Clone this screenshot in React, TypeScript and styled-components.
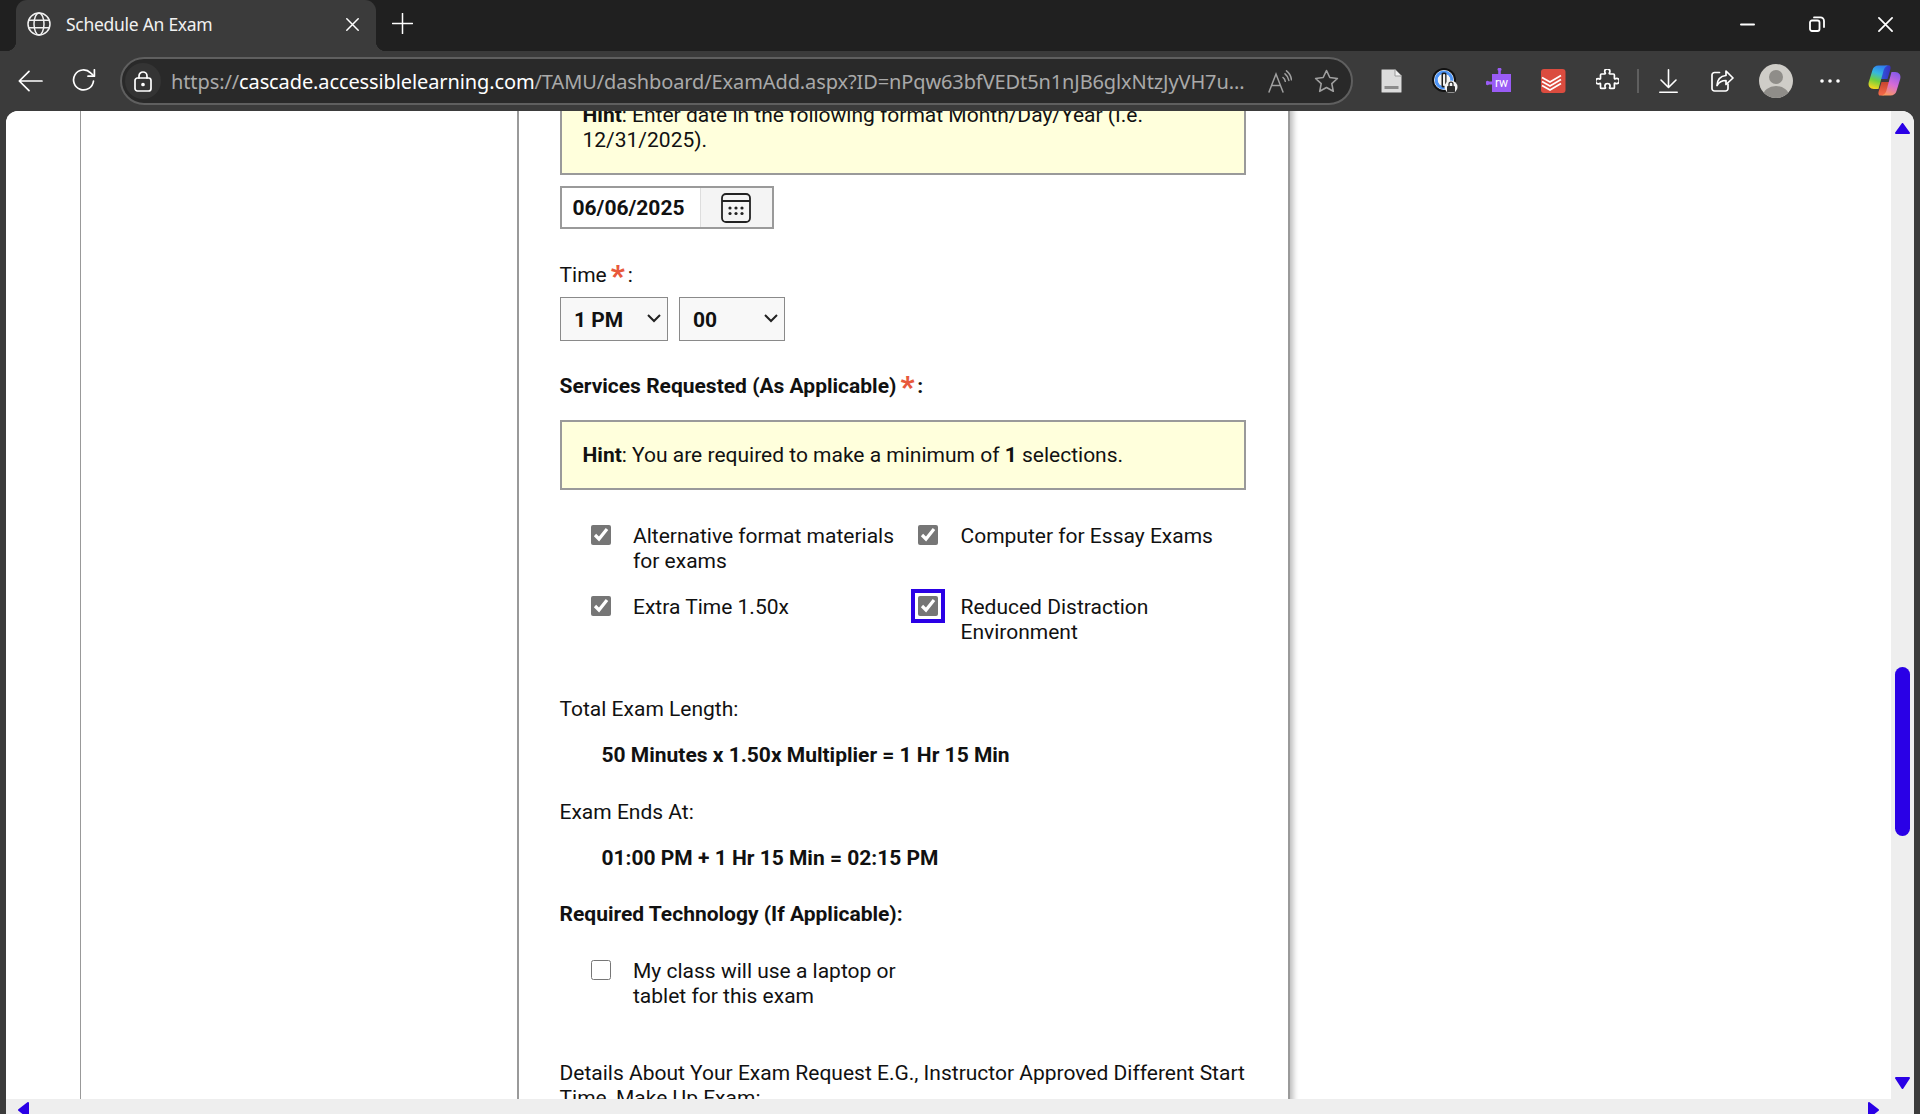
import React from "react";
import styled, { createGlobalStyle } from "styled-components";

const GlobalStyle = createGlobalStyle`
  html, body { margin: 0; padding: 0; overflow: hidden; background: #3b3b3b; }
  * { box-sizing: border-box; }
`;

const Browser = styled.div`
  width: 1920px; height: 1114px; display: flex; flex-direction: column;
  background: #3b3b3b; overflow: hidden; font-family: "Noto Sans", sans-serif;
`;
const TabStrip = styled.div`
  height: 51px; flex: none; background: #202020; display: flex; align-items: stretch; padding-left: 16px;
`;
const Tab = styled.div`
  position: relative; width: 360px; background: #3b3b3b; border-radius: 11px 11px 0 0;
  display: flex; align-items: center; color: #f1f1f1; padding: 0 17px 3px 11px;
  &::before, &::after { content: ""; position: absolute; bottom: 0; width: 10px; height: 10px; }
  &::before { left: -10px; background: radial-gradient(circle at 0 0, #202020 10px, #3b3b3b 10.5px); }
  &::after { right: -10px; background: radial-gradient(circle at 100% 0, #202020 10px, #3b3b3b 10.5px); }
`;
const TabTitle = styled.span`
  font-size: 17.5px; margin-left: 15px; flex: 1; letter-spacing: -0.28px;
`;
const NewTab = styled.div`
  width: 52px; display: flex; align-items: center; justify-content: center; padding-bottom: 4px;
`;
const WindowControls = styled.div`
  margin-left: auto; display: flex; align-items: center; padding: 0 1px 3px 0;
`;
const WindowButton = styled.div`
  width: 69px; display: flex; justify-content: center;
  &:last-child { width: 68px; }
`;
const Toolbar = styled.div`
  height: 60px; flex: none; background: #3b3b3b; display: flex; align-items: center; padding-left: 3px;
`;
const IconSlot = styled.div`
  width: 54px; height: 60px; flex: none; display: flex; align-items: center; justify-content: center;
  padding-bottom: 1px;
`;
const AddressBar = styled.div`
  width: 1233px; height: 48px; margin: 0 11px 0 9px; flex: none; border: 2px solid #5f5f5f; border-radius: 24px;
  background: #292929; display: flex; align-items: center; padding-left: 3px; padding-right: 1px;
`;
const LockCircle = styled.div`
  width: 36px; height: 36px; border-radius: 50%; background: #343434; flex: none;
  display: flex; align-items: center; justify-content: center;
`;
const Url = styled.div`
  flex: 1; min-width: 0; margin-left: 10px; font-size: 20px; color: #a9a9a9; white-space: nowrap; overflow: hidden; letter-spacing: -0.11px;
  b { font-weight: 400; color: #ffffff; }
`;
const AddressAction = styled.div`
  width: 47px; flex: none; display: flex; justify-content: center;
`;
const Separator = styled.div`
  width: 2px; height: 24px; background: #5f5f5f; flex: none; margin: -1px 2px 0 3px;
`;

const Viewport = styled.div`
  flex: 1; min-height: 0; margin: 0 6px; display: flex; border-radius: 12px 12px 0 0; overflow: hidden; background: #fff;
`;
const PageColumn = styled.div`
  flex: 1; min-width: 0; display: flex; flex-direction: column;
`;
const PageArea = styled.div`
  flex: 1; min-height: 0; display: flex; overflow: hidden; background: #fff;
`;
const SideRule = styled.div`
  width: 75px; flex: none; border-right: 1px solid #999;
`;
const Card = styled.main`
  width: 773px; margin-left: 435.5px; flex: none; border: solid #9a9a9a; border-width: 0 2px; align-self: flex-start;
  background: #fff; box-shadow: 5px 0 6px -2px rgba(0,0,0,.28);
  padding: 0 41.7px 0 41px; margin-top: -30px; height: 1100px;
  font-family: Roboto, "Liberation Sans", sans-serif; font-size: 21px; line-height: 25px; color: #111;
`;
const Hint = styled.div<{ $first?: boolean }>`
  background: #ffffdc; border: 2px solid #9a9a9a; padding: ${p => (p.$first ? "20px 21px" : "21px 21px 20px")};
  margin-top: ${p => (p.$first ? 0 : 21)}px;
  b { font-weight: 700; }
`;
const DateField = styled.div`
  margin-top: 11px; width: 214px; height: 43px; display: flex; border: 2px solid #9a9a9a;
`;
const DateInput = styled.input`
  width: 138px; border: 0; padding: 0 0 0 11px; margin: 0; font: 700 21px Roboto, sans-serif; color: #111; background: #fff; outline: none;
`;
const CalendarButton = styled.div`
  flex: 1; background: #f4f4f4; border-left: 1px solid #ddd; display: flex; align-items: center; justify-content: center;
`;
const FieldLabel = styled.div<{ $top: number; $bold?: boolean }>`
  margin-top: ${p => p.$top}px; font-weight: ${p => (p.$bold ? 700 : 400)};
`;
const Required = styled.span`
  color: #e8593c; font-weight: 900; font-size: 30px; line-height: 0; vertical-align: -4px; margin: 0 3px 0 4px;
`;
const SelectRow = styled.div`
  display: flex; gap: 11px; margin-top: 9px;
`;
const SelectBox = styled.div`
  position: relative; display: flex;
  svg { position: absolute; right: 7px; top: 17px; pointer-events: none; }
`;
const TimeSelect = styled.select<{ $width: number }>`
  appearance: none; width: ${p => p.$width}px; height: 44px; background: #f8f8f8; border: 1px solid #8a8a8a; border-radius: 0;
  font: 700 21px Roboto, sans-serif; color: #111; padding: 2px 0 0 13.5px; margin: 0;
`;
const OptionGrid = styled.div<{ $top: number }>`
  display: grid; grid-template-columns: 327.5px 1fr; row-gap: 21px; margin-top: ${p => p.$top}px; padding-left: 31px;
`;
const Option = styled.label`
  display: flex; align-items: flex-start; gap: 22.5px; width: 320px;
`;
const Check = styled.input<{ $focused?: boolean }>`
  width: 20px; height: 20px; margin: 1.5px 0 0; flex: none; accent-color: #767676;
  outline: ${p => (p.$focused ? "4px solid #2a00e6" : "none")}; outline-offset: 3px;
`;
const Computed = styled.div<{ $top: number }>`
  margin-top: ${p => p.$top}px; padding-left: 42px; font-weight: 700;
`;

const VScroll = styled.div`
  width: 23px; flex: none; background: #eeeeee; display: flex; flex-direction: column; align-items: center;
  padding-top: 12px; padding-right: 1px;
`;
const Thumb = styled.div`
  width: 15px; height: 169px; margin-top: 533px; margin-bottom: 241px; flex: none; background: #2a00e6; border-radius: 8px;
`;
const HScroll = styled.div`
  height: 15px; flex: none; background: #eeeeee; display: flex; justify-content: space-between;
  padding: 3px 12px 0; overflow: hidden;
`;

const W = { fill: "none", stroke: "#fff", strokeWidth: 1.7, strokeLinecap: "round" as const, strokeLinejoin: "round" as const };

const GlobeIcon = () => (
  <svg width="24" height="24" viewBox="0 0 24 24" fill="none" stroke="#f1f1f1" strokeWidth="1.5">
    <circle cx="12" cy="12" r="11" />
    <ellipse cx="12" cy="12" rx="5" ry="11" />
    <path d="M1.6 8.2h20.8M1.6 15.8h20.8" />
  </svg>
);
const CloseIcon = ({ size = 13 }: { size?: number }) => (
  <svg width={size} height={size} viewBox="0 0 13 13" {...W} strokeWidth={1.5}><path d="M.8.8l11.4 11.4M12.2.8L.8 12.2" /></svg>
);
const PlusIcon = () => (
  <svg width="21" height="21" viewBox="0 0 21 21" {...W} strokeWidth={1.5}><path d="M10.5.5v20M.5 10.5h20" /></svg>
);
const MinimizeIcon = () => <svg width="15" height="15" viewBox="0 0 15 15" {...W} strokeWidth={2}><path d="M1 7.5h13" /></svg>;
const RestoreIcon = () => (
  <svg width="16" height="16" viewBox="0 0 16 16" {...W} strokeWidth={1.8}>
    <rect x="1" y="4.5" width="9.5" height="10.5" rx="2" />
    <path d="M5 1.4h6.5a3.5 3.5 0 0 1 3.5 3.5V11" />
  </svg>
);
const BackIcon = () => (
  <svg width="25" height="22" viewBox="0 0 25 22" {...W}><path d="M24 11H1.5M11 1.3L1.3 11l9.7 9.7" /></svg>
);
const ReloadIcon = () => (
  <svg width="25" height="24" viewBox="0 0 25 24" {...W}>
    <path d="M21.5 12a10 10 0 1 1-2.9-8.2L22 7" />
    <path d="M22.4 .8V7.2H16" />
  </svg>
);
const LockIcon = () => (
  <svg width="18" height="21" viewBox="0 0 18 21" {...W}>
    <rect x="1" y="7" width="16" height="13" rx="2.5" />
    <path d="M5 7V5a4 4 0 0 1 8 0v2" />
    <circle cx="9" cy="13.5" r="1" fill="#fff" />
  </svg>
);
const ReadAloudIcon = () => (
  <svg width="24" height="23" viewBox="0 0 24 23" fill="none" stroke="#a0a0a0" strokeWidth="1.5" strokeLinecap="round">
    <path d="M1 22L8 4l7 18M3.6 15.5h8.8" />
    <path d="M15 7.5c1.3 1 2 2.3 2.3 3.8M17 3.8c2.2 1.7 3.5 4 3.9 6.7M18.5 .8c3 2.3 4.6 5.5 5 9" />
  </svg>
);
const StarIcon = () => (
  <svg width="25" height="24" viewBox="0 0 25 24" fill="none" stroke="#a0a0a0" strokeWidth="1.6" strokeLinejoin="round">
    <path d="M12.5 1.5l3.3 7 7.6 1-5.6 5.2 1.5 7.6-6.8-3.8-6.8 3.8 1.5-7.6L1.6 9.5l7.6-1z" />
  </svg>
);
const PageIcon = () => (
  <svg width="21" height="24" viewBox="0 0 21 24">
    <path d="M1.5 .5H14l6.5 6.5v15.5a1 1 0 0 1-1 1h-18a1 1 0 0 1-1-1V1.500a1 1 0 0 1 1-1z" fill="#dcdcdc" stroke="#8a8a8a" />
    <path d="M14 .5V7h6.500" fill="#f0f0f0" stroke="#9a9a9a" />
    <rect x="3.500" y="17" width="14" height="3" fill="#8c8c8c" />
  </svg>
);
const OnePasswordIcon = () => (
  <svg width="26" height="25" viewBox="0 0 26 25">
    <circle cx="12" cy="12" r="12" fill="#111" />
    <circle cx="12" cy="12" r="10" fill="#fff" />
    <circle cx="12" cy="12" r="7.800" fill="none" stroke="#4d94f5" strokeWidth="3.200" />
    <circle cx="12" cy="12" r="6" fill="#f4f4f4" />
    <rect x="9.500" y="4.500" width="5" height="15" rx="1.500" fill="#1c1c1c" />
    <rect x="11" y="6" width="2.200" height="12" rx="1" fill="#f2f2f2" />
    <circle cx="19" cy="19" r="6.500" fill="#f4f4f4" />
    <rect x="15" y="18" width="8" height="6.500" rx="1" fill="#2e2e2e" />
    <path d="M17 18v-1.800a2 2 0 0 1 4 0V18" fill="none" stroke="#2e2e2e" strokeWidth="1.300" />
  </svg>
);
const RwIcon = () => (
  <svg width="26" height="25" viewBox="0 0 26 25">
    <path d="M6 6h6.200V2.800a1.900 1.900 0 1 1 2.600 0V6H25v18H6v-7.500H3a2.100 2.100 0 1 1 0-3h3z" fill="#9a5cf5" />
    <text x="15.500" y="19" textAnchor="middle" fontFamily="Roboto, sans-serif" fontSize="12" fill="#fff">rw</text>
  </svg>
);
const TodoistIcon = () => (
  <svg width="25" height="24" viewBox="0 0 25 24">
    <rect width="24.500" height="24" rx="3" fill="#db4c3f" />
    <path d="M1 8.500l8 4.500 11-6.500M1 12.500l8 4.500 11-6.500M1 16.500l8 4.500 11-6.500" fill="none" stroke="#fff" strokeWidth="1.700" />
  </svg>
);
const PuzzleIcon = () => (
  <svg width="23" height="24" viewBox="0 0 23 24" {...W}>
    <path d="M5.500 5.500h3.200c.6 0 .8-.5.500-1-.4-.7-.5-1.200-.5-1.600a2.600 2.600 0 0 1 5.200 0c0 .4-.1.900-.5 1.600-.3.500-.1 1 .5 1h3.500a1 1 0 0 1 1 1v3.300c0 .6.500.8 1 .5.500-.3.900-.4 1.300-.4a2.600 2.600 0 0 1 0 5.200c-.4 0-.8-.1-1.300-.4-.5-.3-1-.1-1 .5v3.700a1 1 0 0 1-1 1h-3.200c-.6 0-.8-.5-.5-1 .3-.5.400-.9.400-1.300a2.600 2.600 0 0 0-5.200 0c0 .4.100.8.400 1.300.3.500.1 1-.5 1H5.500a1 1 0 0 1-1-1v-3.500c0-.6-.5-.8-1-.5-.5.300-.9.400-1.300.4a2.600 2.600 0 0 1 0-5.200c.4 0 .8.100 1.300.4.500.3 1 .1 1-.5V6.500a1 1 0 0 1 1-1z" transform="translate(0 -.5)" />
  </svg>
);
const DownloadIcon = () => (
  <svg width="19" height="24" viewBox="0 0 19 24" {...W} strokeWidth={1.6}>
    <path d="M9.500 .8v17.500M2 11l7.500 7.500L17 11M.8 23.200h17.400" />
  </svg>
);
const ShareIcon = () => (
  <svg width="23" height="22" viewBox="0 0 23 22" {...W}>
    <path d="M8.500 2.500H3.500a2.500 2.500 0 0 0-2.500 2.500v13.500a2.500 2.500 0 0 0 2.500 2.500h11a2.500 2.500 0 0 0 2.500-2.500V14" />
    <path d="M15 1l7 7-7 6.500v-4c-4 0-7 1.500-9 5 .3-5.500 3.500-9.500 9-10z" />
  </svg>
);
const AvatarIcon = () => (
  <svg width="34" height="34" viewBox="0 0 34 34">
    <defs><clipPath id="avatarClip"><circle cx="17" cy="17" r="17" /></clipPath></defs>
    <circle cx="17" cy="17" r="17" fill="#cfcdc8" />
    <g clipPath="url(#avatarClip)" fill="#8f8d89">
      <circle cx="17" cy="13" r="7" />
      <ellipse cx="17" cy="32" rx="13" ry="10" />
    </g>
  </svg>
);
const DotsIcon = () => (
  <svg width="20" height="4" viewBox="0 0 20 4" fill="#fff"><circle cx="2" cy="2" r="1.800" /><circle cx="10" cy="2" r="1.800" /><circle cx="18" cy="2" r="1.800" /></svg>
);
const CopilotIcon = () => (
  <svg width="35" height="31" viewBox="0 0 34 31">
    <defs>
      <linearGradient id="copA" x1="0.6" y1="0" x2="0.3" y2="1">
        <stop offset="0" stopColor="#2f7df0" />
        <stop offset="0.35" stopColor="#35b8e0" />
        <stop offset="0.65" stopColor="#6fd03f" />
        <stop offset="1" stopColor="#f7d81e" />
      </linearGradient>
      <linearGradient id="copB" x1="0.7" y1="0" x2="0.3" y2="1">
        <stop offset="0" stopColor="#8a5bea" />
        <stop offset="0.5" stopColor="#d66bd6" />
        <stop offset="1" stopColor="#fb9a5a" />
      </linearGradient>
      <linearGradient id="copC" x1="0" y1="0" x2="0" y2="1">
        <stop offset="0" stopColor="#c8452f" />
        <stop offset="1" stopColor="#f56b4a" />
      </linearGradient>
      <linearGradient id="copD" x1="0" y1="0" x2="1" y2="0">
        <stop offset="0" stopColor="#2b5fe0" />
        <stop offset="1" stopColor="#3a2fbf" />
      </linearGradient>
    </defs>
    <path d="M22 .5h-3c-2 0-3.500 1.300-4 3.200L12 14h8l3-10c.5-2-.5-3.500-1-3.500z" fill="url(#copD)" />
    <path d="M12 30.500h3c2 0 3.500-1.300 4-3.200L22 17h-8l-3 10c-.5 2 .5 3.500 1 3.500z" fill="url(#copC)" />
    <path d="M11 .5h11c-3 0-5 1.800-5.800 4.500L11 24H6.500C2.500 24 .2 20.800 1.300 17L5 5c.8-2.800 3-4.500 6-4.500z" fill="url(#copA)" />
    <path d="M23 30.500H13c3 0 5-1.800 5.800-4.500L24 7h3.500c4 0 6.300 3.200 5.200 7L29 26c-.8 2.800-3 4.500-6 4.500z" fill="url(#copB)" />
  </svg>
);
const CalendarIcon = () => (
  <svg width="30" height="30" viewBox="0 0 30 30" fill="none" stroke="#222" strokeWidth="1.800">
    <rect x="1" y="1" width="28" height="28" rx="4" />
    <path d="M1 8h28" />
    <g fill="#222" stroke="none">
      {[15, 20.500].map(y => [9, 15, 21].map(x => <circle key={`${x}-${y}`} cx={x} cy={y} r="1.600" />))}
    </g>
  </svg>
);
const Chevron = () => (
  <svg width="14" height="9" viewBox="0 0 14 9" fill="none" stroke="#222" strokeWidth="2"><path d="M1 1l6 6 6-6" /></svg>
);
const Arrow = ({ d, w, h }: { d: string; w: number; h: number }) => (
  <svg width={w} height={h} viewBox={`0 0 ${w} ${h}`} fill="#2a00e6" stroke="#2a00e6" strokeWidth="2" strokeLinejoin="round"><path d={d} /></svg>
);

const CheckOption = ({ label, checked, focused }: { label: string; checked?: boolean; focused?: boolean }) => (
  <Option>
    <Check type="checkbox" defaultChecked={checked} $focused={focused} />
    <span>{label}</span>
  </Option>
);

export default function App() {
  return (
    <Browser>
      <GlobalStyle />
      <TabStrip>
        <Tab>
          <GlobeIcon />
          <TabTitle>Schedule An Exam</TabTitle>
          <CloseIcon />
        </Tab>
        <NewTab><PlusIcon /></NewTab>
        <WindowControls>
          <WindowButton><MinimizeIcon /></WindowButton>
          <WindowButton><RestoreIcon /></WindowButton>
          <WindowButton><CloseIcon size={15} /></WindowButton>
        </WindowControls>
      </TabStrip>
      <Toolbar>
        <IconSlot><BackIcon /></IconSlot>
        <IconSlot><ReloadIcon /></IconSlot>
        <AddressBar>
          <LockCircle><LockIcon /></LockCircle>
          <Url>https://<b>cascade.accessiblelearning.com</b>/TAMU/dashboard/ExamAdd.aspx?ID=nPqw63bfVEDt5n1nJB6glxNtzJyVH7u...</Url>
          <AddressAction><ReadAloudIcon /></AddressAction>
          <AddressAction><StarIcon /></AddressAction>
        </AddressBar>
        <IconSlot><PageIcon /></IconSlot>
        <IconSlot><OnePasswordIcon /></IconSlot>
        <IconSlot><RwIcon /></IconSlot>
        <IconSlot><TodoistIcon /></IconSlot>
        <IconSlot><PuzzleIcon /></IconSlot>
        <Separator />
        <IconSlot><DownloadIcon /></IconSlot>
        <IconSlot><ShareIcon /></IconSlot>
        <IconSlot><AvatarIcon /></IconSlot>
        <IconSlot><DotsIcon /></IconSlot>
        <IconSlot><CopilotIcon /></IconSlot>
      </Toolbar>
      <Viewport>
        <PageColumn>
          <PageArea>
            <SideRule />
            <Card>
              <Hint $first><b>Hint</b>: Enter date in the following format Month/Day/Year (I.e. 12/31/2025).</Hint>
              <DateField>
                <DateInput defaultValue="06/06/2025" />
                <CalendarButton><CalendarIcon /></CalendarButton>
              </DateField>
              <FieldLabel $top={34}>Time<Required>*</Required>:</FieldLabel>
              <SelectRow>
                <SelectBox>
                  <TimeSelect $width={108} defaultValue="1 PM"><option>1 PM</option></TimeSelect>
                  <Chevron />
                </SelectBox>
                <SelectBox>
                  <TimeSelect $width={106} defaultValue="00"><option>00</option></TimeSelect>
                  <Chevron />
                </SelectBox>
              </SelectRow>
              <FieldLabel $top={33} $bold>Services Requested (As Applicable)<Required>*</Required>:</FieldLabel>
              <Hint><b>Hint</b>: You are required to make a minimum of <b>1</b> selections.</Hint>
              <OptionGrid $top={33.5}>
                <CheckOption label="Alternative format materials for exams" checked />
                <CheckOption label="Computer for Essay Exams" checked />
                <CheckOption label="Extra Time 1.50x" checked />
                <CheckOption label="Reduced Distraction Environment" checked focused />
              </OptionGrid>
              <FieldLabel $top={52}>Total Exam Length:</FieldLabel>
              <Computed $top={21}>50 Minutes x 1.50x Multiplier = 1 Hr 15 Min</Computed>
              <FieldLabel $top={32}>Exam Ends At:</FieldLabel>
              <Computed $top={21}>01:00 PM + 1 Hr 15 Min = 02:15 PM</Computed>
              <FieldLabel $top={31} $bold>Required Technology (If Applicable):</FieldLabel>
              <OptionGrid $top={32}>
                <CheckOption label="My class will use a laptop or tablet for this exam" />
              </OptionGrid>
              <FieldLabel $top={52}>Details About Your Exam Request E.G., Instructor Approved Different Start Time, Make Up Exam:</FieldLabel>
            </Card>
          </PageArea>
          <HScroll>
            <Arrow w={11} h={16} d="M10 1L1 8l9 7z" />
            <Arrow w={11} h={16} d="M1 1l9 7-9 7z" />
          </HScroll>
        </PageColumn>
        <VScroll>
          <Arrow w={15} h={11} d="M7.500 1L14 10H1z" />
          <Thumb />
          <Arrow w={15} h={12} d="M1 1h13L7.500 11z" />
        </VScroll>
      </Viewport>
    </Browser>
  );
}
